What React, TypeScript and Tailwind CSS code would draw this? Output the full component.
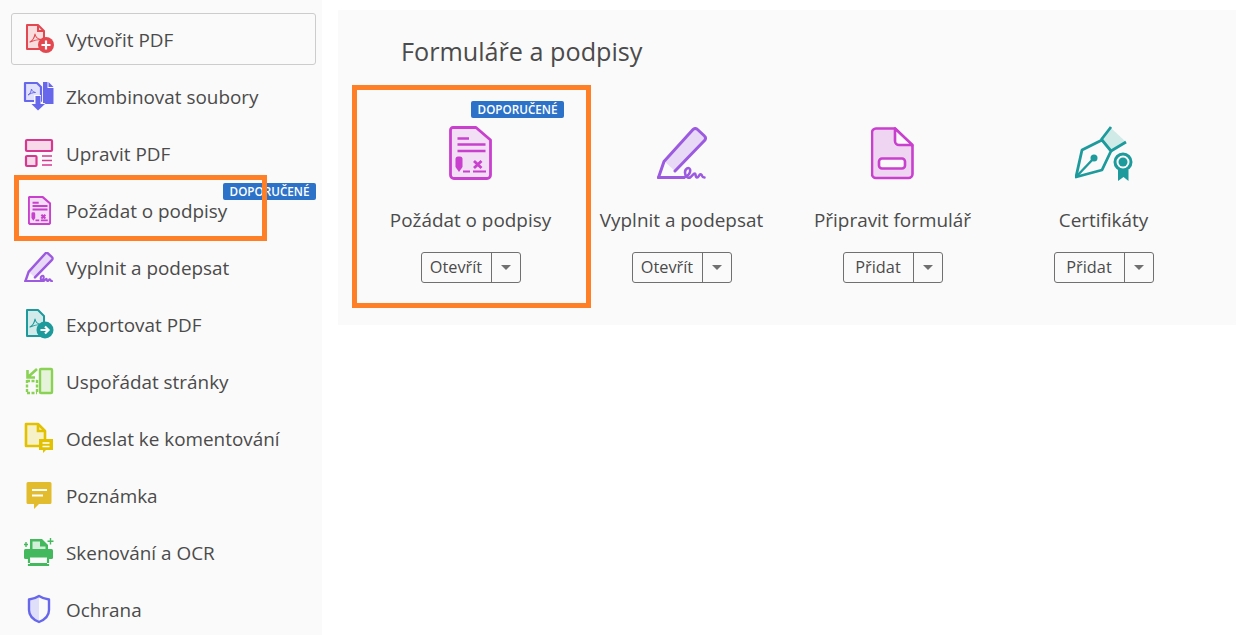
import { ReactNode } from 'react'

const red = '#e34850'
const indigo = '#6767ec'
const pink = '#d83790'
const magenta = '#c93fce'
const purple = '#9c5ae0'
const teal = '#1c9a9c'
const lime = '#8ad253'
const yellow = '#e2c100'
const mustard = '#e2bc2c'
const green = '#43b85c'

const PdfMark = ({ color }: { color: string }) => (
  <path d="M6 18c2.500-1.500 4.500-4.500 5-8 .5 3 2.500 5 6 5.500-4 0-7.500 1-11 2.500z" fill="none" stroke={color} strokeWidth="1.100" strokeLinejoin="round" />
)

const CreateIcon = () => (
  <svg width="30" height="30" viewBox="0 0 30 30">
    <path d="M3 1h11l6 6v18H3z" fill="#f9dcdd" stroke={red} strokeWidth="2" strokeLinejoin="round" />
    <path d="M14 1v6h6" fill="none" stroke={red} strokeWidth="2" />
    <PdfMark color={red} />
    <circle cx="22" cy="21" r="8" fill={red} />
    <path d="M22 16.500v9M17.500 21h9" stroke="#fff" strokeWidth="2.200" />
  </svg>
)

const CombineIcon = () => (
  <svg width="32" height="30" viewBox="0 0 32 30">
    <path d="M2 2h12l4 4v14H2z" fill="#e1e1fb" stroke={indigo} strokeWidth="2.200" strokeLinejoin="round" />
    <path d="M5 14c2-1 3-3 3.500-6 .5 2 1.500 3 4 3.500-3 0-5 1-7.500 2.500z" fill="none" stroke={indigo} strokeWidth="1" />
    <path d="M20 1h4.500v6h6v16H20z" fill={indigo} />
    <path d="M25.500 1l5 5h-5z" fill={indigo} />
    <path d="M11 14h7v8h4.500L14.500 30 7 22h4z" fill="#fafafa" />
    <path d="M12.500 15h5v8h4.500L15 29.500 8.500 23h4z" fill={indigo} />
  </svg>
)

const EditIcon = () => (
  <svg width="30" height="30" viewBox="0 0 30 30">
    <rect x="2" y="2" width="26" height="11" rx="1" fill="#f8d9ea" stroke={pink} strokeWidth="2.200" />
    <rect x="2" y="18" width="10.500" height="10" rx="1" fill="#f8d9ea" stroke={pink} strokeWidth="2.200" />
    <path d="M18 18h10M18 22.500h10M18 27h10" stroke={pink} strokeWidth="1.600" />
  </svg>
)

// same drawing in both places, the sidebar one just needs heavier strokes
const RequestIcon = ({ width = 43, height = 54, stroke = 2.8 }: { width?: number; height?: number; stroke?: number }) => (
  <svg width={width} height={height} viewBox="0 0 43 54">
    <path d="M4 1.500h23L41.500 14v35a3.500 3.500 0 0 1-3.500 3.500H5A3.500 3.500 0 0 1 1.500 49V4A2.500 2.500 0 0 1 4 1.500z" fill="#f3dff5" stroke={magenta} strokeWidth={stroke} strokeLinejoin="round" />
    <path d="M8.500 12.500h11.500M8.500 18.500h28M8.500 25h28" stroke={magenta} strokeWidth={stroke * 0.9} />
    <path d="M6.500 33a2.500 2.500 0 0 1 2.500-2.500h2A2.500 2.500 0 0 1 13.500 33v8L10 46l-3.500-5z" fill={magenta} />
    <path d="M14 45.500h7M24 45.500h13" stroke={magenta} strokeWidth={stroke * 0.8} />
    <path d="M25 35l7.500 7M32.500 35L25 42" stroke={magenta} strokeWidth={stroke} />
  </svg>
)

const FillIcon = ({ width = 50, height = 52, stroke = 3 }: { width?: number; height?: number; stroke?: number }) => (
  <svg width={width} height={height} viewBox="0 0 50 52">
    <path d="M8 35L38 2l11 10-31 32z" fill="#e8daf7" />
    <path d="M1.500 50.500L7 34.500 36 2.500a3 3 0 0 1 4.500 0l7 6.500a3 3 0 0 1 0 4.500L18 44" fill="none" stroke={purple} strokeWidth={stroke} strokeLinejoin="round" strokeLinecap="round" />
    <path d="M1.500 50.500H27" stroke={purple} strokeWidth={stroke} strokeLinecap="round" />
    <path d="M27 50.500c4-1 7-5 6-8s-5-1-5 3 3 6 5 5 3-4 5-4c1 0 0 4 2 4s2-4 4-3 0 3 3.500 3" fill="none" stroke={purple} strokeWidth={stroke * 0.85} strokeLinecap="round" />
  </svg>
)

const ExportIcon = () => (
  <svg width="30" height="30" viewBox="0 0 30 30">
    <path d="M3 1h11l6 6v20H3z" fill="#d2eaea" stroke={teal} strokeWidth="2" strokeLinejoin="round" />
    <PdfMark color={teal} />
    <circle cx="21" cy="21" r="8.500" fill={teal} />
    <path d="M16.500 21h8M21 17.500l3.500 3.500-3.500 3.500" fill="none" stroke="#fff" strokeWidth="2.200" />
  </svg>
)

const OrganizeIcon = () => (
  <svg width="30" height="28" viewBox="0 0 30 28">
    <rect x="16" y="2" width="12" height="24" rx="1" fill="#e5f3da" stroke={lime} strokeWidth="2.400" />
    <path d="M3 26h10M3 14h10M3 13v13M13 13v13" fill="none" stroke={lime} strokeWidth="2.400" strokeDasharray="3 1.500" />
    <path d="M13 2L4 10M3.500 3v7.500H11" fill="none" stroke={lime} strokeWidth="2.600" />
  </svg>
)

const CommentIcon = () => (
  <svg width="30" height="32" viewBox="0 0 30 32">
    <path d="M2 2h12l7 7v15H2z" fill="#f7f1c8" stroke={yellow} strokeWidth="2.600" strokeLinejoin="round" />
    <path d="M14 2v7h7" fill="none" stroke={yellow} strokeWidth="2.600" />
    <path d="M15 17h14v11h-7l-3 3v-3h-4z" fill={yellow} />
    <path d="M18.500 21h7M18.500 24.500h7" stroke="#fff" strokeWidth="1.400" />
  </svg>
)

const NoteIcon = () => (
  <svg width="30" height="30" viewBox="0 0 30 30">
    <path d="M4 2h22a1.500 1.500 0 0 1 1.500 1.500v19A1.500 1.500 0 0 1 26 24H15l-5 5v-5H4a1.500 1.500 0 0 1-1.500-1.500v-19A1.500 1.500 0 0 1 4 2z" fill={mustard} />
    <path d="M8 10h15M8 15.500h11" stroke="#fff" strokeWidth="2.200" />
  </svg>
)

const ScanIcon = () => (
  <svg width="30" height="30" viewBox="0 0 30 30">
    <path d="M6 13V2h12l6 6v5z" fill={green} />
    <path d="M8.500 13V4.500h7.500v5h5.500V13z" fill="#d3efd9" />
    <rect x="0" y="12" width="29" height="10" rx="1.500" fill={green} />
    <path d="M6 20.500h17V28H6z" fill="#fafafa" />
    <path d="M5 22v7M24 22v7" stroke={green} strokeWidth="2.200" strokeDasharray="4 1" />
    <path d="M6 27.500h17" stroke={green} strokeWidth="3" />
    <path d="M26.500 1v6.500M23.500 4.200h6M2 5v5M0 7.500h4" stroke={green} strokeWidth="1.400" />
  </svg>
)

const ShieldIcon = () => (
  <svg width="30" height="30" viewBox="0 0 30 30">
    <path d="M15 2C12 4 9 5 5 5.500V16c0 6 5 10 10 12z" fill="#dfdffa" />
    <path d="M15 2c3 2 6 3 10 3.500V16c0 6-5 10-10 12C10 26 5 22 5 16V5.500C9 5 12 4 15 2z" fill="none" stroke={indigo} strokeWidth="2.400" strokeLinejoin="round" />
  </svg>
)

const PrepareIcon = () => (
  <svg width="43" height="53" viewBox="0 0 43 53">
    <path d="M5 1.500h19L41.500 19v28a4 4 0 0 1-4 4H5a4 4 0 0 1-4-4V5.500a4 4 0 0 1 4-4z" fill="#efd5f1" stroke={magenta} strokeWidth="2.600" strokeLinejoin="round" />
    <path d="M24 1.500V14a4 4 0 0 0 4 4h13.500z" fill="#fafafa" stroke={magenta} strokeWidth="2.600" strokeLinejoin="round" />
    <rect x="8" y="31.500" width="26" height="10" rx="3" fill="#fafafa" stroke={magenta} strokeWidth="2.600" />
  </svg>
)

const CertIcon = () => (
  <svg width="58" height="55" viewBox="0 0 58 55">
    <path d="M27 14L36 2l15 14-15 9z" fill="#d0ebe7" />
    <path d="M1 51L7 24l20-10 9 11-9 19z" fill="none" stroke={teal} strokeWidth="2.800" strokeLinejoin="round" />
    <path d="M1 51l18-19" stroke={teal} strokeWidth="2.400" />
    <circle cx="19" cy="32" r="3.500" fill={teal} />
    <path d="M26 14L36 1M36 25l15-9" stroke={teal} strokeWidth="2.800" />
    <circle cx="48" cy="36" r="8" fill="#fafafa" stroke={teal} strokeWidth="3" />
    <circle cx="48" cy="36" r="4.500" fill={teal} />
    <path d="M43 44v11l5.500-4 5 4V44z" fill={teal} />
  </svg>
)

const sideItems: { label: string; icon: ReactNode }[] = [
  { label: 'Vytvořit PDF', icon: <CreateIcon /> },
  { label: 'Zkombinovat soubory', icon: <CombineIcon /> },
  { label: 'Upravit PDF', icon: <EditIcon /> },
  { label: 'Požádat o podpisy', icon: <RequestIcon width={23} height={29} stroke={4} /> },
  { label: 'Vyplnit a podepsat', icon: <FillIcon width={30} height={30} stroke={4.2} /> },
  { label: 'Exportovat PDF', icon: <ExportIcon /> },
  { label: 'Uspořádat stránky', icon: <OrganizeIcon /> },
  { label: 'Odeslat ke komentování', icon: <CommentIcon /> },
  { label: 'Poznámka', icon: <NoteIcon /> },
  { label: 'Skenování a OCR', icon: <ScanIcon /> },
  { label: 'Ochrana', icon: <ShieldIcon /> },
]

const cards: { label: string; action: string; icon: ReactNode }[] = [
  { label: 'Požádat o podpisy', action: 'Otevřít', icon: <RequestIcon /> },
  { label: 'Vyplnit a podepsat', action: 'Otevřít', icon: <FillIcon /> },
  { label: 'Připravit formulář', action: 'Přidat', icon: <PrepareIcon /> },
  { label: 'Certifikáty', action: 'Přidat', icon: <CertIcon /> },
]

const Badge = () => (
  <span className="block h-[17px] px-[6.5px] rounded-[2px] bg-[#2c72c9] text-white text-[11.7px] leading-[17px] font-semibold whitespace-nowrap">
    DOPORUČENÉ
  </span>
)

export default function App() {
  return (
    <div className="relative flex h-[635px] w-[1239px] overflow-hidden bg-white text-[#4b4b4b] font-['Open_Sans','Noto_Sans',sans-serif]">
      {/* Sidebar */}
      <aside className="w-[322px] shrink-0 bg-[#fafafa] pt-[13px] pl-[11px] pr-[6px]">
        {sideItems.map((item, i) => (
          <div
            key={item.label}
            className={`relative flex items-center h-[52px] mb-[5px] rounded-[3px] border ${i === 0 ? 'border-[#cccccc]' : 'border-transparent'}`}
          >
            <div className="w-[54px] shrink-0 flex justify-center">{item.icon}</div>
            <span className="pt-[2px] text-[18.9px] whitespace-nowrap">{item.label}</span>
            {i === 3 && (
              <div className="absolute right-[-1px] top-[-2px]">
                <Badge />
              </div>
            )}
          </div>
        ))}
      </aside>

      {/* Main */}
      <main className="flex-1 pl-[16px] pt-[10px] pr-[3px]">
        <section className="h-[315px] bg-[#fafafa] pt-[24px]">
          <h2 className="pl-[63px] text-[25.2px] leading-[34px] font-normal">Formuláře a podpisy</h2>
          <div className="flex pl-[27px] mt-[16px]">
            {cards.map((card, i) => (
              <div key={card.label} className="relative w-[211px] flex flex-col items-center">
                {i === 0 && (
                  <div className="absolute right-[12px] top-[17px]">
                    <Badge />
                  </div>
                )}
                <div className="h-[60px] mt-[39px] flex items-center justify-center">{card.icon}</div>
                <div className="mt-[24px] text-[18.9px] leading-[26px] whitespace-nowrap">{card.label}</div>
                <div className="mt-[19px] flex h-[31px] w-[100px] rounded-[3px] border border-[#707070] text-[16.3px]">
                  <span className="flex-1 flex items-center justify-center border-r border-[#707070]">{card.action}</span>
                  <span className="w-[28px] flex items-center justify-center">
                    <span className="w-0 h-0 border-x-[5px] border-x-transparent border-t-[5px] border-t-[#707070]" />
                  </span>
                </div>
              </div>
            ))}
          </div>
        </section>
      </main>

      {/* Orange annotation boxes */}
      <div className="absolute left-[14px] top-[175px] w-[253px] h-[66px] border-[5px] border-[#ff7f27]" />
      <div className="absolute left-[352px] top-[85px] w-[239px] h-[223px] border-[5px] border-[#ff7f27]" />
    </div>
  )
}
